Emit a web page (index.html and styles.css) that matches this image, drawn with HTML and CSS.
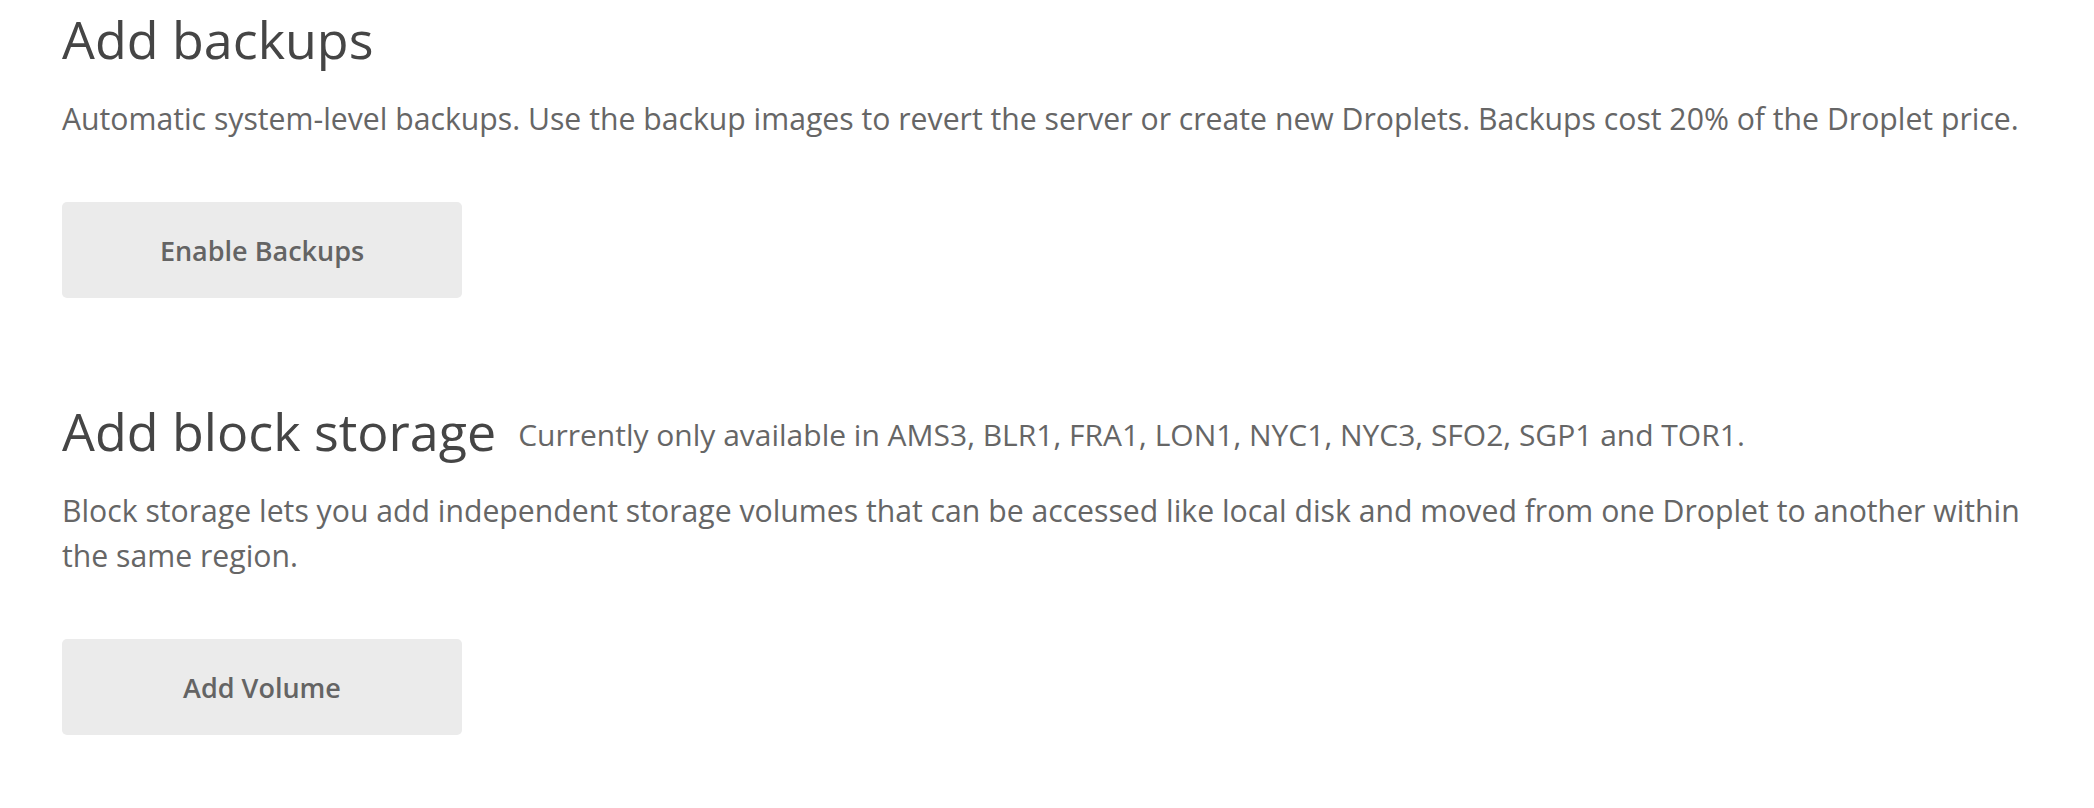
FILE: index.html
```html
<!DOCTYPE html>
<html lang="en">
<head>
<meta charset="utf-8">
<title>Add backups</title>
<link rel="stylesheet" href="styles.css">
</head>
<body>
<main class="page">
  <section class="option">
    <h2 class="option-title">Add backups</h2>
    <p class="option-desc">Automatic system-level backups. Use the backup images to revert the server or create new Droplets. Backups cost 20% of the Droplet price.</p>
    <button class="btn" type="button">Enable Backups</button>
  </section>
  <section class="option">
    <h2 class="option-title">Add block storage<span class="option-note">Currently only available in AMS3, BLR1, FRA1, LON1, NYC1, NYC3, SFO2, SGP1 and TOR1.</span></h2>
    <p class="option-desc">Block storage lets you add independent storage volumes that can be accessed like local disk and moved from one Droplet to another within the same region.</p>
    <button class="btn" type="button">Add Volume</button>
  </section>
</main>
</body>
</html>
```
FILE: styles.css
```css
html, body {
  margin: 0;
  padding: 0;
  background: #ffffff;
}

body {
  font-family: "Open Sans", "Noto Sans", sans-serif;
  color: #666666;
}

.page {
  padding: 8px 62px 0 62px;
  display: flex;
  flex-direction: column;
  gap: 102px;
}

.option {
  display: flex;
  flex-direction: column;
  align-items: flex-start;
}

.option-title {
  margin: 0;
  font-size: 52px;
  line-height: 62px;
  font-weight: 400;
  color: #454545;
  white-space: nowrap;
}

.option-note {
  margin-left: 22px;
  font-size: 30px;
  line-height: 36px;
  font-weight: 400;
  color: #666666;
  vertical-align: 5px;
}

.option-desc {
  margin: 26px 0 0 0;
  font-size: 30.2px;
  line-height: 45px;
  color: #666666;
}

.btn {
  margin-top: 61px;
  width: 400px;
  height: 96px;
  border: 0;
  border-radius: 5px;
  background: #ebebeb;
  color: #646464;
  font-family: "Open Sans", "Noto Sans", sans-serif;
  font-size: 27px;
  font-weight: 600;
  display: flex;
  align-items: center;
  justify-content: center;
  padding: 0;
  cursor: pointer;
}
```
